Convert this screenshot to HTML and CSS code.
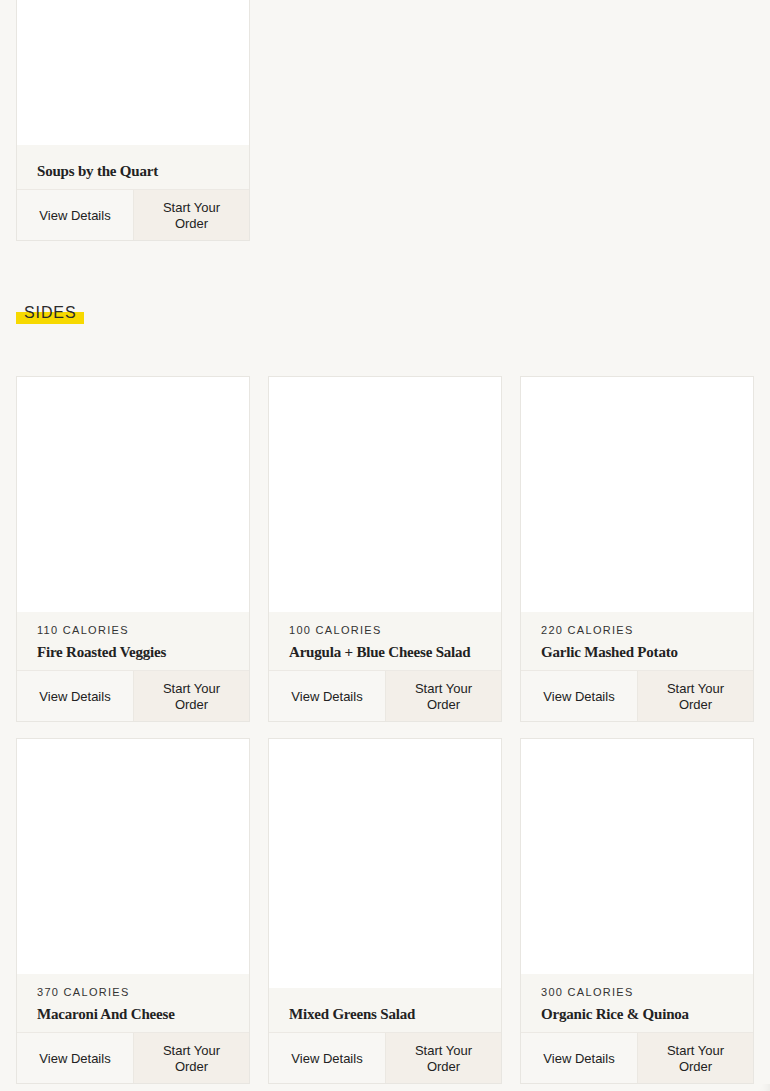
FILE: index.html
```html
<!DOCTYPE html>
<html>
<head>
	<title>Menu - Sides</title>
	<meta name="viewport" content="width=device-width, initial-scale=1.0">
	<link rel="stylesheet" href="styles.css">
</head>
<body>
	<div class="menu">
		<section class="section section-top">
			<div class="grid">
				<div class="card">
					<div class="card-img"></div>
					<div class="card-body">
						<h3 class="card-title">Soups by the Quart</h3>
					</div>
					<div class="card-actions">
						<a class="btn btn-details" href="#">View Details</a>
						<a class="btn btn-order" href="#">Start Your<br>Order</a>
					</div>
				</div>
			</div>
		</section>

		<section class="section">
			<h2 class="section-title"><span>Sides</span></h2>
			<div class="grid">
				<div class="card">
					<div class="card-img"></div>
					<div class="card-body">
						<div class="card-cal">110 Calories</div>
						<h3 class="card-title">Fire Roasted Veggies</h3>
					</div>
					<div class="card-actions">
						<a class="btn btn-details" href="#">View Details</a>
						<a class="btn btn-order" href="#">Start Your<br>Order</a>
					</div>
				</div>
				<div class="card">
					<div class="card-img"></div>
					<div class="card-body">
						<div class="card-cal">100 Calories</div>
						<h3 class="card-title">Arugula + Blue Cheese Salad</h3>
					</div>
					<div class="card-actions">
						<a class="btn btn-details" href="#">View Details</a>
						<a class="btn btn-order" href="#">Start Your<br>Order</a>
					</div>
				</div>
				<div class="card">
					<div class="card-img"></div>
					<div class="card-body">
						<div class="card-cal">220 Calories</div>
						<h3 class="card-title">Garlic Mashed Potato</h3>
					</div>
					<div class="card-actions">
						<a class="btn btn-details" href="#">View Details</a>
						<a class="btn btn-order" href="#">Start Your<br>Order</a>
					</div>
				</div>
				<div class="card">
					<div class="card-img"></div>
					<div class="card-body">
						<div class="card-cal">370 Calories</div>
						<h3 class="card-title">Macaroni And Cheese</h3>
					</div>
					<div class="card-actions">
						<a class="btn btn-details" href="#">View Details</a>
						<a class="btn btn-order" href="#">Start Your<br>Order</a>
					</div>
				</div>
				<div class="card">
					<div class="card-img"></div>
					<div class="card-body">
						<h3 class="card-title">Mixed Greens Salad</h3>
					</div>
					<div class="card-actions">
						<a class="btn btn-details" href="#">View Details</a>
						<a class="btn btn-order" href="#">Start Your<br>Order</a>
					</div>
				</div>
				<div class="card">
					<div class="card-img"></div>
					<div class="card-body">
						<div class="card-cal">300 Calories</div>
						<h3 class="card-title">Organic Rice &amp; Quinoa</h3>
					</div>
					<div class="card-actions">
						<a class="btn btn-details" href="#">View Details</a>
						<a class="btn btn-order" href="#">Start Your<br>Order</a>
					</div>
				</div>
			</div>
		</section>
	</div>
</body>
</html>
```

FILE: styles.css
```css
html, body {
	margin: 0;
	padding: 0;
	background: #f8f7f4;
	color: #222;
	font-family: "Liberation Sans", Arial, sans-serif;
}

html {
	box-shadow: inset -8px 0 8px -6px rgba(0, 0, 0, 0.06);
	min-height: 100%;
}

.menu {
	padding: 0 16px;
}

.section-top {
	margin-top: -105px;
}

.section-title {
	margin: 61px 0 52px;
	font-size: 16px;
	font-weight: normal;
	line-height: 22px;
	letter-spacing: 0.9px;
	text-transform: uppercase;
}

.section-title span {
	display: inline-block;
	padding: 0 7px 0 8px;
	color: #2a2a2a;
	background: linear-gradient(transparent 45%, #f7d900 45%);
}

.grid {
	display: grid;
	grid-template-columns: repeat(3, 1fr);
	column-gap: 18px;
	row-gap: 16px;
}

.card {
	display: flex;
	flex-direction: column;
	height: 346px;
	box-sizing: border-box;
	border: 1px solid #e8e6e1;
	background: #f7f6f2;
}

.card-img {
	flex: 1;
	background: #fff;
}

.card-body {
	padding: 15px 20px 7px;
}

.card-cal {
	margin: -3px 0 5px;
	font-size: 11px;
	line-height: 12px;
	letter-spacing: 1.3px;
	text-transform: uppercase;
	color: #333;
}

.card-title {
	margin: 0;
	font-family: "Liberation Serif", "Times New Roman", serif;
	font-size: 15px;
	font-weight: bold;
	line-height: 22px;
	letter-spacing: -0.2px;
	color: #222;
}

.card-actions {
	display: grid;
	grid-template-columns: 117px 1fr;
	height: 50px;
	border-top: 1px solid #ece9e4;
}

.btn {
	display: flex;
	align-items: center;
	justify-content: center;
	padding-top: 2px;
	text-align: center;
	font-size: 13px;
	line-height: 16px;
	color: #222;
	text-decoration: none;
}

.btn-details {
	background: #f8f7f4;
	border-right: 1px solid #ebe8e2;
}

.btn-order {
	background: #f3efe9;
}
```
